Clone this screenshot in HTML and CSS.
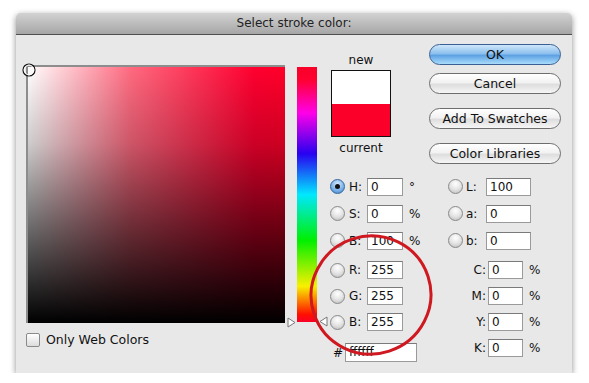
FILE: index.html
```html
<!DOCTYPE html>
<html>
<head>
<meta charset="utf-8">
<link rel="stylesheet" href="styles.css">
</head>
<body>
<div class="dialog">
  <div class="titlebar">Select stroke color:</div>
  <div class="content">
    <div class="picker-col">
      <div class="field">
        <svg class="marker" width="16" height="16" viewBox="0 0 16 16"><circle cx="8" cy="8" r="6" fill="none" stroke="#111" stroke-width="1.2"/><circle cx="8" cy="8" r="4.8" fill="none" stroke="#fff" stroke-width="1"/></svg>
      </div>
      <label class="webcolors"><span class="checkbox"></span><span>Only Web Colors</span></label>
    </div>
    <div class="slider-col">
      <div class="hue"></div>
      <svg class="tri tri-left" width="9" height="11" viewBox="0 0 9 11"><path d="M1 1 L8 5.5 L1 10 Z" fill="#fff" stroke="#777" stroke-width="1"/></svg>
      <svg class="tri tri-right" width="9" height="11" viewBox="0 0 9 11"><path d="M8 1 L1 5.5 L8 10 Z" fill="#fff" stroke="#777" stroke-width="1"/></svg>
    </div>
    <div class="right-area">
      <div class="top-part">
        <div class="swatch-col">
          <div class="cap">new</div>
          <div class="swatch"><div class="sw-new"></div><div class="sw-cur"></div></div>
          <div class="cap cap-cur">current</div>
        </div>
        <div class="buttons">
          <div class="btn btn-ok">OK</div>
          <div class="btn btn-cancel">Cancel</div>
          <div class="btn btn-gap">Add To Swatches</div>
          <div class="btn btn-gap">Color Libraries</div>
        </div>
      </div>
      <div class="fields">
        <div class="group-left">
          <div class="block">
            <div class="row"><span class="radio on"></span><span class="lbl">H:</span><span class="inp">0</span><span class="unit">°</span></div>
            <div class="row"><span class="radio"></span><span class="lbl">S:</span><span class="inp">0</span><span class="unit">%</span></div>
            <div class="row"><span class="radio"></span><span class="lbl">B:</span><span class="inp">100</span><span class="unit">%</span></div>
          </div>
          <div class="block block2">
            <div class="row r26"><span class="radio"></span><span class="lbl">R:</span><span class="inp">255</span></div>
            <div class="row r26"><span class="radio"></span><span class="lbl">G:</span><span class="inp">255</span></div>
            <div class="row r26"><span class="radio"></span><span class="lbl">B:</span><span class="inp">255</span></div>
          </div>
          <div class="row hashrow"><span class="hash">#</span><span class="inp hex">ffffff</span></div>
        </div>
        <div class="group-right">
          <div class="block">
            <div class="row"><span class="radio"></span><span class="lbl2">L:</span><span class="inp wide">100</span></div>
            <div class="row"><span class="radio"></span><span class="lbl2">a:</span><span class="inp wide">0</span></div>
            <div class="row"><span class="radio"></span><span class="lbl2">b:</span><span class="inp wide">0</span></div>
          </div>
          <div class="block block2">
            <div class="row r26"><span class="lbl3">C:</span><span class="inp">0</span><span class="unit">%</span></div>
            <div class="row r26"><span class="lbl3">M:</span><span class="inp">0</span><span class="unit">%</span></div>
            <div class="row r26"><span class="lbl3">Y:</span><span class="inp">0</span><span class="unit">%</span></div>
            <div class="row r26"><span class="lbl3">K:</span><span class="inp">0</span><span class="unit">%</span></div>
          </div>
        </div>
      </div>
    </div>
  </div>
  <svg class="annot" width="556" height="360" viewBox="0 0 556 360"><ellipse cx="355" cy="282" rx="60" ry="59" transform="rotate(-18 355 282)" fill="none" stroke="#cf1820" stroke-width="3"/></svg>
</div>
</body>
</html>
```

FILE: styles.css
```css
* { box-sizing: border-box; }
body {
  margin: 0;
  background: #fff;
  font-family: "DejaVu Sans", "Lucida Grande", sans-serif;
  font-size: 12px;
  color: #111;
}
.dialog {
  position: relative;
  margin: 13px 0 0 16px;
  width: 556px;
  height: 360px;
  background: #e8e8e8;
  border-radius: 5px 5px 0 0;
  box-shadow: 0 2px 6px rgba(0,0,0,0.45);
}
.titlebar {
  height: 22px;
  line-height: 20px;
  text-align: center;
  color: #222;
  font-size: 12px;
  background: linear-gradient(#d2d2d2, #a6a6a6);
  border-bottom: 1px solid #4f4f4f;
  border-radius: 5px 5px 0 0;
}
.content {
  display: flex;
  padding-left: 10px;
}
.picker-col {
  margin-top: 30px;
  width: 259px;
}
.field {
  position: relative;
  width: 259px;
  height: 258px;
  border-top: 2px solid #8d8d8d;
  border-left: 2px solid #8d8d8d;
  background:
    linear-gradient(to bottom, rgba(0,0,0,0) 0%, rgba(0,0,0,0.2) 30%, rgba(0,0,0,0.55) 60%, #000 100%),
    linear-gradient(to right, #fff 0%, #ff6a80 40%, #ff0030 88%, #ff0028 100%);
}
.marker {
  position: absolute;
  left: -7px;
  top: -5px;
}
.webcolors {
  display: flex;
  align-items: center;
  margin-top: 9px;
  font-size: 12.5px;
}
.checkbox {
  width: 14px;
  height: 14px;
  border: 1px solid #8a8a8a;
  border-radius: 2px;
  background: linear-gradient(#fff, #dcdcdc);
  margin-right: 6px;
}
.slider-col {
  position: relative;
  margin-left: 12px;
  margin-top: 32px;
  width: 20px;
  height: 255px;
}
.hue {
  width: 20px;
  height: 255px;
  background: linear-gradient(to bottom, #f80028 0%, #ff0030 5%, #ff00e8 18%, #2800f0 34%, #00e8ff 50%, #00f000 68%, #f8f000 86%, #ff1000 97%, #f80028 100%);
}
.tri { position: absolute; }
.tri-left { left: -10px; top: 250px; }
.tri-right { left: 22px; top: 249px; }
.right-area {
  margin-left: 12px;
  width: 243px;
}
.top-part {
  display: flex;
  height: 138px;
}
.swatch-col {
  margin-left: 2px;
  width: 60px;
  display: flex;
  flex-direction: column;
  align-items: center;
}
.cap {
  margin-top: 18px;
  line-height: 14px;
}
.cap-cur { margin-top: 4px; }
.swatch {
  margin-top: 3px;
  width: 60px;
  height: 67px;
  border: 1px solid #111;
  display: flex;
  flex-direction: column;
}
.sw-new { flex: 1; background: #fff; }
.sw-cur { flex: 1; background: #fb0028; }
.buttons {
  margin-left: 38px;
  margin-top: 9px;
  width: 132px;
  display: flex;
  flex-direction: column;
}
.btn {
  height: 21px;
  line-height: 19px;
  text-align: center;
  border: 1px solid #6d6d6d;
  border-radius: 11px;
  background: linear-gradient(#ffffff 0%, #f2f2f2 45%, #dedede 55%, #f6f6f6 100%);
  font-size: 12.5px;
  color: #111;
}
.btn-ok {
  border-color: #3a5f94;
  background: linear-gradient(#cfe6fb 0%, #8dc0ee 45%, #5ea2e4 55%, #a8dcfb 100%);
}
.btn-cancel { margin-top: 8px; }
.btn-gap { margin-top: 14px; }
.fields {
  display: flex;
}
.group-left { width: 118px; }
.group-right { width: 125px; }
.block2 { margin-top: 3px; }
.row {
  display: flex;
  align-items: center;
  height: 27px;
}
.r26 { height: 26px; }
.radio {
  width: 15px;
  height: 15px;
  border-radius: 50%;
  border: 1px solid #8a8a8a;
  background: radial-gradient(circle at 50% 30%, #fff 0%, #e4e4e4 50%, #b9b9b9 100%);
  margin-left: 1px;
  position: relative;
}
.radio.on {
  border-color: #35649c;
  background: radial-gradient(circle at 50% 30%, #d3e8fb 0%, #7fb5ea 55%, #3d7fcd 100%);
}
.radio.on::after {
  content: "";
  position: absolute;
  left: 4px;
  top: 4px;
  width: 5px;
  height: 5px;
  border-radius: 50%;
  background: #111;
}
.lbl {
  width: 22px;
  padding-left: 4px;
}
.lbl2 {
  width: 23px;
  padding-left: 3px;
}
.lbl3 {
  width: 41px;
  text-align: right;
  padding-right: 2px;
}
.inp {
  width: 36px;
  height: 18px;
  line-height: 16px;
  background: #fff;
  border: 1px solid #9a9a9a;
  border-top-color: #7a7a7a;
  padding-left: 3px;
  font-size: 12px;
}
.inp.wide { width: 45px; }
.group-right .block2 .inp { width: 35px; }
.unit {
  margin-left: 6px;
}
.hashrow { margin-top: 4px; }
.hash {
  margin-left: 4px;
  width: 12px;
}
.inp.hex {
  width: 72px;
  height: 19px;
  line-height: 17px;
  font-size: 12px;
}
.annot {
  position: absolute;
  left: 0;
  top: 0;
  pointer-events: none;
}
```
